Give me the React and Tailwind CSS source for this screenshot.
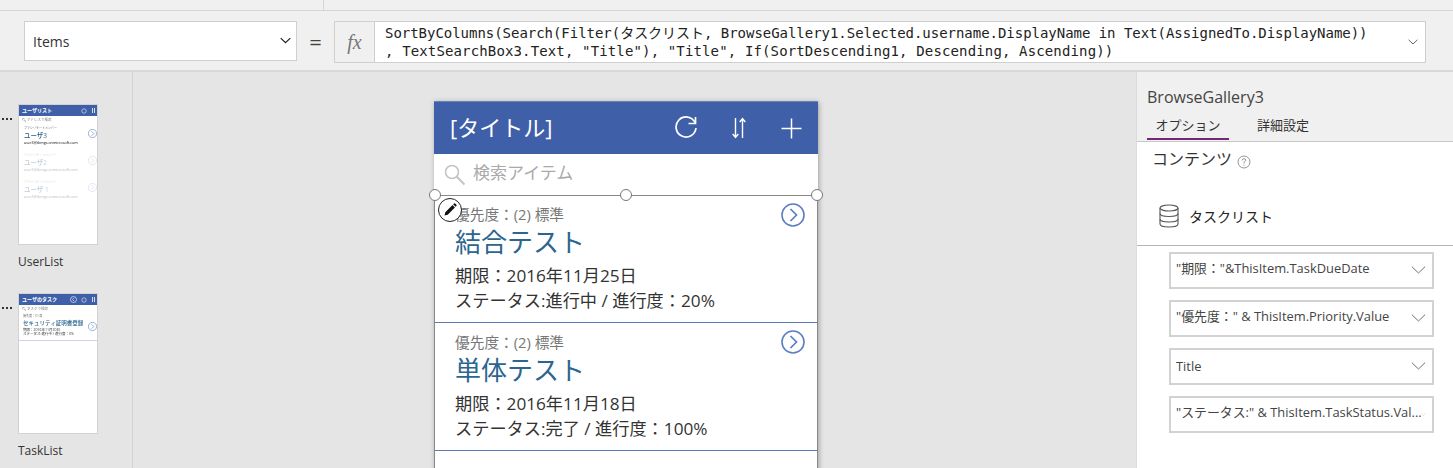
const sans = { fontFamily: '"Open Sans","Noto Sans CJK JP",sans-serif' };

function Chevron({ className = "", w = 16, h = 8, sw = 1 }) {
  return (
    <svg width={w} height={h} viewBox="0 0 16 8" fill="none" stroke="currentColor" strokeWidth={sw} className={className}>
      <path d="M1 0.5 L8 7.2 L15 0.5" />
    </svg>
  );
}

function CircleNext({ size = 24, opacity = 1 }) {
  return (
    <svg width={size} height={size} viewBox="0 0 24 24" fill="none" stroke="#5b7fbf" style={{ opacity }} strokeWidth="1.6">
      <circle cx="12" cy="12" r="11" />
      <path d="M9.5 6 L15.5 12 L9.5 18" strokeWidth="1.7" />
    </svg>
  );
}

function MiniRow({ faded, name }) {
  return (
    <div className={`relative h-[27px] pl-[5px] pt-[3px] leading-none ${faded ? "opacity-30" : ""}`}>
      <div className="text-[3px] text-[#666] h-[4px]">ファシリテートメンバー</div>
      <div className="text-[6.5px] font-medium text-[#2c5f8e] h-[9px] leading-[9px]">{name}</div>
      <div className="text-[3.7px] text-black h-[5px] leading-[5px]">user3@tkmgs.onmicrosoft.com</div>
      <div className="absolute right-[0px] top-[5px] bg-white"><CircleNext size={9} /></div>
    </div>
  );
}

function Thumb({ title, children, back, label, mt }) {
  return (
    <div className={`relative pl-[18px] ${mt}`}>
      <div className="absolute left-[2px] top-[14px] flex gap-[2px]">
        <span className="w-[2px] h-[2px] bg-[#333]" />
        <span className="w-[2px] h-[2px] bg-[#333]" />
        <span className="w-[2px] h-[2px] bg-[#333]" />
      </div>
      <div className="w-[80px] h-[141px] bg-white border border-[#d2d2d2] overflow-hidden">
        <div className="blur-[0.4px]">
          <div className="h-[11px] bg-[#3f5fa8] flex items-center pl-[3px] pr-[2px] text-white text-[5px] font-semibold leading-none">
            <span className="flex-1 whitespace-nowrap">{title}</span>
            {back && <svg width="7" height="7" viewBox="0 0 7 7" fill="none" stroke="white" strokeWidth="0.6" className="mr-[4px]"><circle cx="3.5" cy="3.5" r="3" /><path d="M4.2 1.8 L2.5 3.5 L4.2 5.2" /></svg>}
            <svg width="6" height="6" viewBox="0 0 6 6" fill="none" stroke="#d7def0" strokeWidth="0.7" className="mr-[5px]"><circle cx="3" cy="3" r="2.2" /></svg>
            <span className="w-[3px] h-[5px] border-x border-[#d7def0]" />
          </div>
          {children}
        </div>
      </div>
      <div className="mt-[9px] text-[12px] leading-[16px] text-[#333]">{label}</div>
    </div>
  );
}

function GalleryRow({ date, status, title, h, pt }) {
  return (
    <div className={`relative border-b border-[#5b7ab5] pl-[20px] ${h}`}>
      <div className={`${pt} text-[14.7px] leading-[20px] text-[#777]`}>優先度：(2) 標準</div>
      <div className="text-[26px] leading-[38px] text-[#2c668f] mt-[-1px]">{title}</div>
      <div className="mt-[2px] text-[17.2px] leading-[25px] text-[#333]">{date}</div>
      <div className="text-[17.2px] leading-[25px] text-[#333]">{status}</div>
      <div className="absolute right-[12px] top-[7px]"><CircleNext size={24} /></div>
    </div>
  );
}

function Handle({ className }) {
  return <span className={`absolute w-[12px] h-[12px] rounded-full bg-white border border-[#777] ${className}`} />;
}

function Field({ text, small, cjk }) {
  return (
    <div className="h-[37px] ml-[32px] mr-[19px] border-2 border-[#d2d2d2] flex items-center pl-[5px] pr-[6px] text-[12.9px] text-[#444]">
      <span className={`flex-1 whitespace-nowrap overflow-hidden ${cjk ? "pb-[3px]" : ""}`}>{text}</span>
      {small ? <Chevron w={5} h={3} className="text-[#aaa] shrink-0" /> : <Chevron w={15} h={8} className="text-[#666] mb-[2px] shrink-0" />}
    </div>
  );
}

export default function App() {
  return (
    <div className="w-[1453px] h-[468px] flex flex-col overflow-hidden bg-[#e5e5e5] [text-spacing-trim:space-all]" style={sans}>
      {/* top strip */}
      <div className="h-[11px] bg-[#f0f0f0] border-b border-[#d6d6d6] flex shrink-0">
        <div className="w-[324px] border-r border-[#d6d6d6]" />
      </div>
      {/* formula bar */}
      <div className="h-[61px] bg-[#f0f0f0] border-b-2 border-[#d8d8d8] flex items-start pt-[10px] pl-[24px] shrink-0">
        <div className="w-[273px] h-[40px] bg-white border border-[#cfcfcf] flex items-center pl-[8px] pr-[4px] text-[14px] text-[#333]">
          <span className="flex-1">Items</span>
          <Chevron w={11} h={7} sw={1.8} className="text-[#222] mr-[1px] mb-[2px]" />
        </div>
        <div className="w-[37px] h-[40px] flex items-center justify-center text-[#444] text-[22px] leading-none">=</div>
        <div className="w-[41px] h-[42px] border border-[#cfcfcf] flex items-center justify-center text-[#777] text-[20px] italic" style={{ fontFamily: '"Liberation Serif",serif' }}>fx</div>
        <div className="w-[1051px] h-[42px] bg-white border border-[#cfcfcf] border-l-0 flex items-start pl-[10px] pr-[7px]">
          <div className="flex-1 pt-[2px] text-[14px] leading-[18px] text-[#222] whitespace-pre" style={{ fontFamily: '"DejaVu Sans Mono","Noto Sans CJK JP",monospace' }}>
            <div className="tracking-[-0.03px]">SortByColumns(Search(Filter(タスクリスト, BrowseGallery1.Selected.username.DisplayName in Text(AssignedTo.DisplayName))</div>
            <div className="tracking-[0.14px]">{', TextSearchBox3.Text, "Title"), "Title", If(SortDescending1, Descending, Ascending))'}</div>
          </div>
          <Chevron w={10} h={6} sw={1.6} className="text-[#666] mt-[17px]" />
        </div>
      </div>
      {/* main */}
      <div className="flex-1 flex min-h-0">
        {/* left panel */}
        <div className="w-[133px] border-r border-[#d2d2d2] pt-[32px] shrink-0">
          <Thumb title="ユーザリスト" label="UserList">
            <div className="h-[8px] pl-[3px] text-[3.5px] leading-[8px] text-[#888]">🔍︎ アドレスで検索</div>
            <MiniRow name="ユーザ3" />
            <MiniRow faded name="ユーザ2" />
            <MiniRow faded name="ユーザ 1" />
          </Thumb>
          <Thumb title="ユーザのタスク" label="TaskList" back mt="mt-[23px]">
            <div className="h-[8px] pl-[3px] text-[3.5px] leading-[8px] text-[#888]">🔍︎ タスクで検索</div>
            <div className="relative h-[28px] border-b border-[#cdd6e8] pl-[4px] pt-[2px] leading-none">
              <div className="text-[3px] text-[#666] h-[4px]">優先度：(1) 高</div>
              <div className="text-[5.5px] font-medium text-[#2c668f] h-[9px] leading-[9px] whitespace-nowrap">セキュリティ証明書登録</div>
              <div className="text-[3.5px] text-[#333] h-[4px] leading-[4px]">期限：2016年11月20日</div>
              <div className="text-[3.5px] text-[#333] h-[4px] leading-[4px]">ステータス:進行中 / 進行度：0%</div>
              <div className="absolute right-[0px] top-[9px]"><CircleNext size={9} /></div>
            </div>
          </Thumb>
        </div>
        {/* canvas */}
        <div className="flex-1 pl-[301px] pt-[29px] min-w-0">
          <div className="w-[384px] h-[400px] bg-white shadow-[1px_1px_5px_rgba(0,0,0,0.3)]">
            <div className="h-[53px] bg-[#3f5fa8] border-t border-[#6a84bd] flex items-center pl-[16px] text-white text-[22px] leading-none">
              <span className="flex-1 mb-[2px]">[タイトル]</span>
              <svg width="24" height="24" viewBox="0 0 24 24" fill="none" stroke="white" strokeWidth="1.7" className="mr-[34px]">
                <path d="M21 6.5 A10 10 0 1 0 22 12" />
                <path d="M14.5 7.5 L21.5 7.5 L21.5 1" />
              </svg>
              <svg width="14" height="22" viewBox="0 0 14 22" fill="none" stroke="white" strokeWidth="1.4" className="mr-[35px]">
                <path d="M3.5 1 V20.5 M0.7 17 L3.5 20.5 L6.3 17" />
                <path d="M10.5 21 V1.5 M7.7 5 L10.5 1.5 L13.3 5" />
              </svg>
              <svg width="21" height="21" viewBox="0 0 21 21" fill="none" stroke="white" strokeWidth="1.5" className="mr-[16px]">
                <path d="M10.5 0.5 V20.5 M0.5 10.5 H20.5" />
              </svg>
            </div>
            <div className="h-[41px] flex items-center pl-[10px] text-[17px] text-[#aaa]">
              <svg width="22" height="22" viewBox="0 0 22 22" fill="none" stroke="#c4c4c4" strokeWidth="1.6" className="mr-[7px] mt-[1px]">
                <circle cx="8" cy="8" r="6.5" />
                <path d="M12.8 12.8 L20.5 20.5" strokeWidth="2" />
              </svg>
              <span className="mb-[3px]">検索アイテム</span>
            </div>
            <div className="relative border-t border-[#888] border-x border-x-[#888]">
              <Handle className="left-[-6px] top-[-7px]" />
              <Handle className="left-[185px] top-[-7px]" />
              <Handle className="right-[-6px] top-[-7px]" />
              <div className="absolute left-[3px] top-[2px] w-[24px] h-[24px] rounded-full bg-white border border-[#222] flex items-center justify-center z-10">
                <svg width="14" height="14" viewBox="0 0 14 14" fill="#111">
                  <path d="M1.5 12.5 L2.3 9.3 L9.5 2.1 L11.9 4.5 L4.7 11.7 Z M10.2 1.4 L11 0.6 Q11.6 0.1 12.2 0.6 L13.4 1.8 Q13.9 2.4 13.4 3 L12.6 3.8 Z" />
                </svg>
              </div>
              <GalleryRow h="h-[127px]" pt="pt-[8px]" title="結合テスト" date="期限：2016年11月25日" status="ステータス:進行中 / 進行度：20%" />
              <GalleryRow h="h-[128px]" pt="pt-[9px]" title="単体テスト" date="期限：2016年11月18日" status="ステータス:完了 / 進行度：100%" />
              <div className="h-[20px]" />
            </div>
          </div>
        </div>
        {/* right panel */}
        <div className="w-[317px] shrink-0 bg-white border-l border-[#dcdcdc] flex flex-col">
          <div className="h-[70px] bg-[#f0f0f0] border-b border-[#c8c8c8] pl-[10px] relative shrink-0">
            <div className="pt-[14px] text-[16px] leading-[22px] text-[#444]">BrowseGallery3</div>
            <div className="flex mt-[8px] text-[13px] leading-[18px] text-[#333]">
              <div className="w-[82px] h-[24px] text-center border-b-[2px] border-[#742774]">オプション</div>
              <div className="ml-[28px]">詳細設定</div>
            </div>
          </div>
          <div className="h-[104px] border-b border-[#b4b4b4] relative shrink-0">
            <div className="flex items-center pl-[15px] pt-[6px] text-[16px] leading-[22px] text-[#333]">
              <span>コンテンツ</span>
              <svg width="14" height="14" viewBox="0 0 14 14" fill="none" stroke="#888" strokeWidth="0.9" className="ml-[5px] mt-[5px]">
                <circle cx="7" cy="7" r="6" />
                <path d="M5.2 5.5 Q5.2 3.7 7 3.7 Q8.8 3.7 8.8 5.3 Q8.8 6.2 7 7.2 V8.5 M7 9.8 V10.8" />
              </svg>
            </div>
            <div className="flex items-center pl-[22px] mt-[34px] text-[14px] text-[#222]">
              <svg width="20" height="24" viewBox="0 0 20 24" fill="none" stroke="#555" strokeWidth="1.1" className="mr-[10px]">
                <ellipse cx="10" cy="4" rx="9" ry="3" />
                <path d="M1 4 V20 C1 22 5 23 10 23 C15 23 19 22 19 20 V4" />
                <path d="M1 9.5 C1 11.5 5 12.5 10 12.5 C15 12.5 19 11.5 19 9.5" />
                <path d="M1 15 C1 17 5 18 10 18 C15 18 19 17 19 15" />
              </svg>
              <span>タスクリスト</span>
            </div>
          </div>
          <div className="flex flex-col gap-[11px] pt-[6px]">
            <Field cjk text={'"期限："&ThisItem.TaskDueDate'} />
            <Field cjk text={'"優先度：" & ThisItem.Priority.Value'} />
            <Field text="Title" />
            <Field cjk text={'"ステータス:" & ThisItem.TaskStatus.Val...'} small />
          </div>
        </div>
      </div>
    </div>
  );
}
